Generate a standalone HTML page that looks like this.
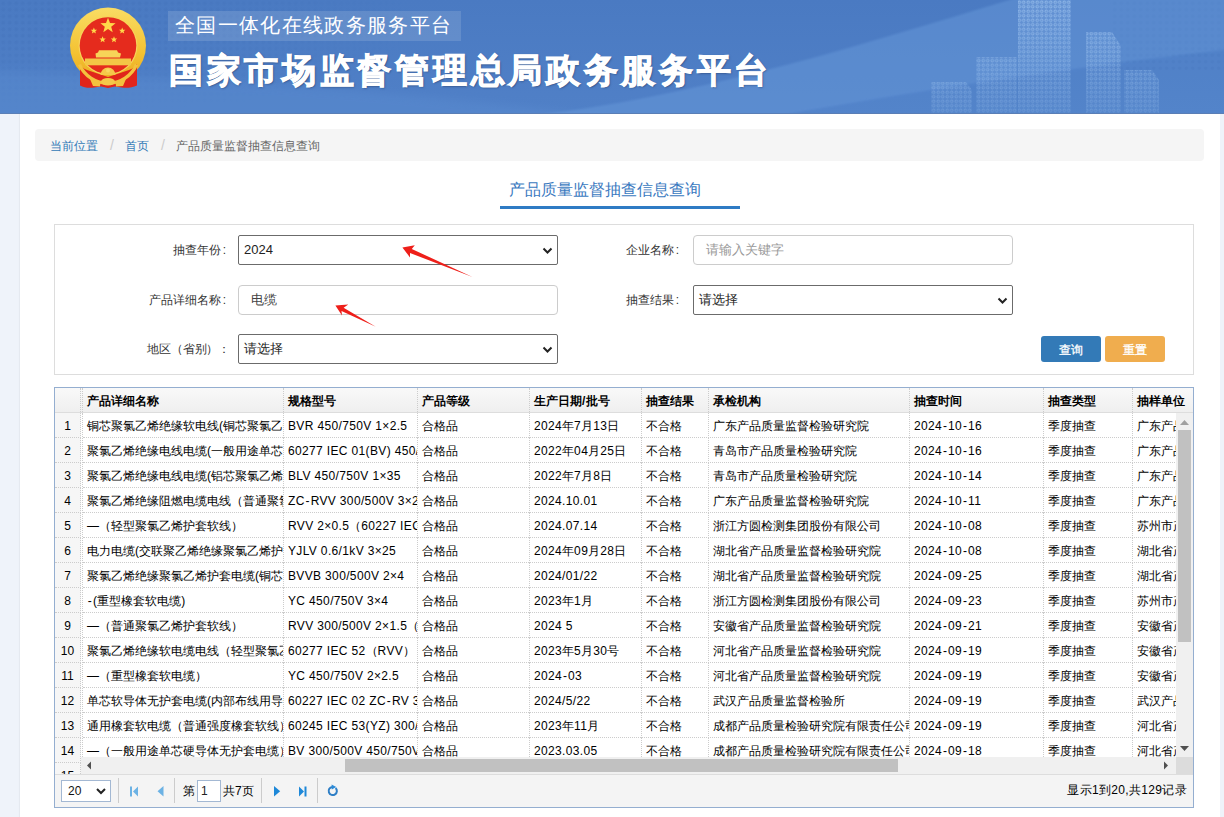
<!DOCTYPE html>
<html><head><meta charset="utf-8">
<style>
*{box-sizing:border-box}
html,body{margin:0;padding:0}
body{width:1224px;height:817px;overflow:hidden;background:#eff3fa;font-family:"Liberation Sans",sans-serif;font-size:12px;color:#333;position:relative}
.a{position:absolute}
#hdr{left:0;top:0;width:1224px;height:114px;overflow:hidden}
#main{left:20px;top:114px;width:1200px;height:703px;background:#fff;box-shadow:-1px 0 1px rgba(0,0,0,0.04)}
#bc{left:35px;top:129px;width:1169px;height:32px;background:#f5f5f5;border-radius:4px;line-height:32px;padding-left:15px;white-space:nowrap;font-size:12px}
#bc .l{color:#337ab7}
#bc .sep{color:#ccc;padding:0 11px 0 12px;font-size:14px}
#bc .cur{color:#666}
#ttl{left:500px;top:176px;width:240px;height:33px;border-bottom:3px solid #2f7bc4;text-align:left;padding-left:9px;font-size:16px;color:#3a79c0;line-height:28px}
#panel{left:54px;top:224px;width:1140px;height:151px;border:1px solid #ddd}
.lbl{position:absolute;font-size:12px;color:#333;line-height:30px;white-space:nowrap;padding-right:0px}
.sel,.inp{position:absolute;height:30px;font-size:13px;line-height:28px;padding-left:5px;color:#222;background:#fff;white-space:nowrap}
.sel{border:1px solid #6b6b6b;border-radius:2px}
.inp{border:1px solid #ccc;border-radius:4px}
.chev{position:absolute;right:4px;top:10.5px}
.btn{position:absolute;height:26px;width:60px;border-radius:3px;color:#fff;text-align:center;line-height:26px;padding-top:1px;font-size:12px;-webkit-text-stroke:0.3px #fff}
#grid{left:54px;top:387px;width:1140px;height:421px;border:1px solid #94aed0;background:#fff;overflow:hidden}
#gh{left:0;top:0;width:1138px;height:25px;background:linear-gradient(#f9f9f9,#efefef);border-bottom:1px solid #ddd}
#gh .c{font-weight:bold;color:#000;height:24px;line-height:24px}
.c{position:absolute;top:0;height:25px;border-right:1px dotted #ccc;padding-left:4px;padding-top:1px;white-space:nowrap;overflow:hidden;line-height:24px;font-size:12px;color:#000}
.r{position:absolute;left:0;width:1300px;height:25px;border-bottom:1px dotted #ccc}
#v2h{left:28px;top:0;width:1110px;height:24px;overflow:hidden}
#rnh{left:0;top:0;width:26px;height:24px;border-right:1px dotted #ccc}
#v2b{left:28px;top:25px;width:1093px;height:344px;overflow:hidden}
#rnb{left:0;top:25px;width:26px;height:361px;overflow:hidden;background:#fff}
.rn{position:absolute;left:0;width:26px;height:25px;text-align:center;line-height:24px;padding-top:1px;color:#000;background:#f6f6f6;border-right:1px dotted #ccc;border-bottom:1px dotted #ccc}
#vs{left:1121px;top:25px;width:17px;height:344px;background:#f0f0f0}
#hs{left:26px;top:369px;width:1095px;height:17px;background:#f0f0f0}
#corner{left:1121px;top:369px;width:17px;height:17px;background:#dcdcdc}
#pg{left:0;top:386px;width:1138px;height:33px;background:#f4f4f4;border-top:1px solid #ddd}
.psep{position:absolute;top:6px;width:1px;height:21px;border-left:1px solid #ccc;border-right:1px solid #fff}
.lt{letter-spacing:0.35px}.hy{font-style:normal;margin:0 0.8px}
</style></head><body>
<div id="hdr" class="a">
<svg width="1224" height="114" viewBox="0 0 1224 114">
<defs>
<linearGradient id="hg" x1="0" y1="0" x2="0" y2="1">
<stop offset="0" stop-color="#4a7ac2"/><stop offset="1" stop-color="#5080c7"/></linearGradient>
<pattern id="dots" width="4.5" height="4.5" patternUnits="userSpaceOnUse"><circle cx="2.25" cy="2.25" r="1.3" fill="none" stroke="#a9cdf5" stroke-width="0.9"/></pattern>
<pattern id="hd" width="6.5" height="6.5" patternUnits="userSpaceOnUse"><circle cx="3.25" cy="3.25" r="1.9" fill="#3d6bb2"/></pattern>
<linearGradient id="bfade" x1="0" y1="0" x2="0" y2="1"><stop offset="0" stop-color="#fff" stop-opacity="1"/><stop offset="1" stop-color="#fff" stop-opacity="0.35"/></linearGradient>
<mask id="bm"><rect width="1224" height="114" fill="url(#bfade)"/></mask>
<linearGradient id="gold" x1="0" y1="0" x2="0" y2="1"><stop offset="0" stop-color="#f9dc64"/><stop offset="0.6" stop-color="#f4c232"/><stop offset="1" stop-color="#e9a81e"/></linearGradient>
</defs>
<rect width="1224" height="114" fill="url(#hg)"/>
<filter id="blr" x="-10%" y="-50%" width="120%" height="200%"><feGaussianBlur stdDeviation="4"/></filter>
<radialGradient id="hdm" cx="0.2" cy="0.2" r="0.8"><stop offset="0" stop-color="#fff"/><stop offset="1" stop-color="#000"/></radialGradient>
<mask id="hdmask"><rect x="0" y="0" width="420" height="114" fill="url(#hdm)"/></mask>
<rect x="0" y="0" width="420" height="114" fill="url(#hd)" opacity="0.28" mask="url(#hdmask)"/>
<rect x="1110" y="0" width="114" height="70" fill="url(#hd)" opacity="0.25"/>
<filter id="blr2" x="-10%" y="-50%" width="120%" height="200%"><feGaussianBlur stdDeviation="1.2"/></filter>
<path d="M-20 130 L-20 70 C200 78 450 92 700 130 Z" fill="#6193d6" opacity="0.3" filter="url(#blr)"/>
<path d="M530 116 C700 96 860 45 1016 -2 L1226 -2 L1226 50 C1050 70 900 95 777 116 Z" fill="#6a9cdc" opacity="0.45" filter="url(#blr2)"/>
<path d="M777 116 C900 95 1050 70 1226 50 L1226 116 Z" fill="#5d90d4" opacity="0.25" filter="url(#blr2)"/>
<g fill="#9cc0ee" opacity="0.16" mask="url(#bm)">
<path d="M931 82 L966 82 L972 90 L972 114 L931 114 Z"/>
<rect x="976" y="57" width="41" height="57"/>
<rect x="1018" y="0" width="53" height="114"/>
<path d="M1086 32 L1112 32 L1121 46 L1121 114 L1086 114 Z"/>
<path d="M1124 70 L1152 70 L1159 80 L1159 114 L1124 114 Z"/>
</g>
<g fill="url(#dots)" opacity="0.8" mask="url(#bm)">
<path d="M931 82 L966 82 L972 90 L972 114 L931 114 Z"/>
<rect x="976" y="57" width="41" height="57"/>
<rect x="1018" y="0" width="53" height="114"/>
<path d="M1086 32 L1112 32 L1121 46 L1121 114 L1086 114 Z"/>
<path d="M1124 70 L1152 70 L1159 80 L1159 114 L1124 114 Z"/>
</g>
<g>
<circle cx="108" cy="45.5" r="38" fill="url(#gold)"/>
<circle cx="108" cy="45.5" r="29.5" fill="#f7d35a"/>
<circle cx="108" cy="45.5" r="28.3" fill="#e52b1d"/>
<path d="M108 17.8 L110 23.1 L115.6 23.3 L111.2 26.7 L112.7 32.2 L108 29.1 L103.3 32.2 L104.8 26.7 L100.4 23.3 L106 23.1 Z" fill="#ffd84a"/>
<g fill="#ffd84a">
<path d="M93.9 27.5 L94.8 29.7 L97.1 29.8 L95.3 31.3 L95.9 33.5 L93.9 32.2 L91.9 33.5 L92.5 31.3 L90.7 29.8 L93 29.7 Z"/>
<path d="M122.2 27.5 L123.1 29.7 L125.4 29.8 L123.6 31.3 L124.2 33.5 L122.2 32.2 L120.2 33.5 L120.8 31.3 L119 29.8 L121.3 29.7 Z"/>
<path d="M102.6 36.2 L103.5 38.4 L105.8 38.5 L104 40 L104.6 42.2 L102.6 40.9 L100.6 42.2 L101.2 40 L99.4 38.5 L101.7 38.4 Z"/>
<path d="M114 36.2 L114.9 38.4 L117.2 38.5 L115.4 40 L116 42.2 L114 40.9 L112 42.2 L112.6 40 L110.8 38.5 L113.1 38.4 Z"/>
</g>
<path d="M99 50.2 L117 50.2 L118 52.5 L121 53.5 L120 57.4 L96 57.4 L95.5 53.5 L98 52.5 Z" fill="#f7d458"/>
<rect x="85" y="58.5" width="46" height="6.8" fill="#f3c646"/>
<path d="M80 64 L80 85.5 C84 88 90 88 94 87.5 L101 86.5 L108 88 L115 86.5 L122 87.5 C126 88 132 88 137 85.5 L137 64 C134 68 130 70 126 71 L108 77 L90 71 C86 70 82 68 80 64 Z" fill="#e0251b"/>
<path d="M79.5 64.5 A31 31 0 0 0 136.5 64.5" fill="none" stroke="#f3c23e" stroke-width="3.2"/>
<path d="M100.5 75 A7.5 7.5 0 0 1 115.5 75 Z" fill="#f5c84a"/>
<circle cx="108" cy="70.5" r="2" fill="#f9d860"/>
<path d="M90 79 L100.5 81 L100 86.5 L93 86 Z M126 79 L115.5 81 L116 86.5 L123 86 Z" fill="#f3c23e"/>
<ellipse cx="108" cy="81.8" rx="7" ry="3.8" fill="#f5c84a"/>
</g>
<rect x="168" y="11" width="293" height="30" fill="#ffffff" opacity="0.13"/>
<rect id="hline" x="0" y="113" width="1224" height="1" fill="#5b7fb6"/>
</svg>
<div class="a" id="sub" style="left:175px;top:8px;font-size:20px;line-height:34px;color:#fff;letter-spacing:1.35px;white-space:nowrap">全国一体化在线政务服务平台</div>
<div class="a" id="tt" style="left:169px;top:45px;font-size:34px;font-weight:bold;line-height:50px;color:#fff;letter-spacing:3.7px;white-space:nowrap;-webkit-text-stroke:1px #fff;text-shadow:1px 1px 2px rgba(30,50,90,0.6)">国家市场监督管理总局政务服务平台</div>
</div>
<div id="main" class="a"></div>
<div id="bc" class="a"><span class="l">当前位置</span><span class="sep">/</span><span class="l">首页</span><span class="sep">/</span><span class="cur">产品质量监督抽查信息查询</span></div>
<div id="ttl" class="a">产品质量监督抽查信息查询</div>
<div id="panel" class="a"></div>
<div class="lbl" style="left:100px;width:126px;text-align:right;top:235px">抽查年份<span style="margin-left:1.5px">:</span></div>
<div class="lbl" style="left:100px;width:126px;text-align:right;top:285px">产品详细名称<span style="margin-left:1.5px">:</span></div>
<div class="lbl" style="left:100px;width:130px;text-align:right;top:334px;letter-spacing:-0.2px">地区（省别）：</div>
<div class="lbl" style="left:600px;width:79px;text-align:right;top:235px">企业名称<span style="margin-left:1.5px">:</span></div>
<div class="lbl" style="left:600px;width:79px;text-align:right;top:285px">抽查结果<span style="margin-left:1.5px">:</span></div>
<div class="sel" style="left:238px;top:235px;width:320px">2024<svg class="chev" width="11" height="8" viewBox="0 0 11 8"><path d="M1.5 1.5 L5.5 5.5 L9.5 1.5" fill="none" stroke="#222" stroke-width="2"/></svg></div>
<div class="inp" style="left:238px;top:285px;width:320px;padding-left:12px;color:#444">电缆</div>
<div class="sel" style="left:238px;top:334px;width:320px">请选择<svg class="chev" width="11" height="8" viewBox="0 0 11 8"><path d="M1.5 1.5 L5.5 5.5 L9.5 1.5" fill="none" stroke="#222" stroke-width="2"/></svg></div>
<div class="inp" style="left:693px;top:235px;width:320px;padding-left:12px;color:#999">请输入关键字</div>
<div class="sel" style="left:693px;top:285px;width:320px">请选择<svg class="chev" width="11" height="8" viewBox="0 0 11 8"><path d="M1.5 1.5 L5.5 5.5 L9.5 1.5" fill="none" stroke="#222" stroke-width="2"/></svg></div>
<div class="btn" style="left:1041px;top:336px;background:#337ab7">查询</div>
<div class="btn" style="left:1105px;top:336px;background:#f0ad4e">重置</div>
<svg class="a" style="left:0;top:0" width="1224" height="817">
<path d="M402.4 247.4 L414.8 245.3 L411.8 249.0 L472.5 277 L410.0 253.0 L410.0 257.4 Z" fill="#ee1f1a"/>
<path d="M335.4 305.6 L348.3 304.6 L343.6 307.8 L375.8 326.7 L341.5 311.1 L342.0 315.6 Z" fill="#ee1f1a"/>
</svg>
<div id="grid" class="a">
  <div id="gh" class="a">
    <div id="rnh" class="a"></div>
    <div class="a" style="left:27px;top:0;height:24px;border-left:1px dotted #ccc"></div><div id="v2h" class="a"><div class="c" style="left:0px;width:201px">产品详细名称</div><div class="c" style="left:201px;width:134px">规格型号</div><div class="c" style="left:335px;width:112px">产品等级</div><div class="c" style="left:447px;width:112px">生产日期<span class="lt">/</span>批号</div><div class="c" style="left:559px;width:67px">抽查结果</div><div class="c" style="left:626px;width:201px">承检机构</div><div class="c" style="left:827px;width:134px">抽查时间</div><div class="c" style="left:961px;width:89px">抽查类型</div><div class="c" style="left:1050px;width:168px">抽样单位</div></div>
  </div>
  <div id="rnb" class="a"><div class="rn" style="top:0px">1</div><div class="rn" style="top:25px">2</div><div class="rn" style="top:50px">3</div><div class="rn" style="top:75px">4</div><div class="rn" style="top:100px">5</div><div class="rn" style="top:125px">6</div><div class="rn" style="top:150px">7</div><div class="rn" style="top:175px">8</div><div class="rn" style="top:200px">9</div><div class="rn" style="top:225px">10</div><div class="rn" style="top:250px">11</div><div class="rn" style="top:275px">12</div><div class="rn" style="top:300px">13</div><div class="rn" style="top:325px">14</div><div class="rn" style="top:350px">15</div></div>
  <div class="a" style="left:27px;top:25px;height:344px;border-left:1px dotted #ccc"></div><div id="v2b" class="a"><div class="r" style="top:0px"><div class="c" style="left:0px;width:201px">铜芯聚氯乙烯绝缘软电线<span class="lt">(</span>铜芯聚氯乙烯绝缘软电线<span class="lt">)</span></div><div class="c" style="left:201px;width:134px"><span class="lt">BVR 450/750V 1×2.5</span></div><div class="c" style="left:335px;width:112px">合格品</div><div class="c" style="left:447px;width:112px"><span class="lt">2024</span>年<span class="lt">7</span>月<span class="lt">13</span>日</div><div class="c" style="left:559px;width:67px">不合格</div><div class="c" style="left:626px;width:201px">广东产品质量监督检验研究院</div><div class="c" style="left:827px;width:134px"><span class="lt">2024<i class="hy">-</i>10<i class="hy">-</i>16</span></div><div class="c" style="left:961px;width:89px">季度抽查</div><div class="c" style="left:1050px;width:168px">广东产品质量监督检验研究院</div></div><div class="r" style="top:25px"><div class="c" style="left:0px;width:201px">聚氯乙烯绝缘电线电缆<span class="lt">(</span>一般用途单芯硬导体<span class="lt">)</span></div><div class="c" style="left:201px;width:134px"><span class="lt">60277 IEC 01(BV) 450/750V</span></div><div class="c" style="left:335px;width:112px">合格品</div><div class="c" style="left:447px;width:112px"><span class="lt">2022</span>年<span class="lt">04</span>月<span class="lt">25</span>日</div><div class="c" style="left:559px;width:67px">不合格</div><div class="c" style="left:626px;width:201px">青岛市产品质量检验研究院</div><div class="c" style="left:827px;width:134px"><span class="lt">2024<i class="hy">-</i>10<i class="hy">-</i>16</span></div><div class="c" style="left:961px;width:89px">季度抽查</div><div class="c" style="left:1050px;width:168px">广东产品质量</div></div><div class="r" style="top:50px"><div class="c" style="left:0px;width:201px">聚氯乙烯绝缘电线电缆<span class="lt">(</span>铝芯聚氯乙烯绝缘电线<span class="lt">)</span></div><div class="c" style="left:201px;width:134px"><span class="lt">BLV 450/750V 1×35</span></div><div class="c" style="left:335px;width:112px">合格品</div><div class="c" style="left:447px;width:112px"><span class="lt">2022</span>年<span class="lt">7</span>月<span class="lt">8</span>日</div><div class="c" style="left:559px;width:67px">不合格</div><div class="c" style="left:626px;width:201px">青岛市产品质量检验研究院</div><div class="c" style="left:827px;width:134px"><span class="lt">2024<i class="hy">-</i>10<i class="hy">-</i>14</span></div><div class="c" style="left:961px;width:89px">季度抽查</div><div class="c" style="left:1050px;width:168px">广东产品质量</div></div><div class="r" style="top:75px"><div class="c" style="left:0px;width:201px">聚氯乙烯绝缘阻燃电缆电线（普通聚氯乙烯护套软线）</div><div class="c" style="left:201px;width:134px"><span class="lt">ZC<i class="hy">-</i>RVV 300/500V 3×2.5</span></div><div class="c" style="left:335px;width:112px">合格品</div><div class="c" style="left:447px;width:112px"><span class="lt">2024.10.01</span></div><div class="c" style="left:559px;width:67px">不合格</div><div class="c" style="left:626px;width:201px">广东产品质量监督检验研究院</div><div class="c" style="left:827px;width:134px"><span class="lt">2024<i class="hy">-</i>10<i class="hy">-</i>11</span></div><div class="c" style="left:961px;width:89px">季度抽查</div><div class="c" style="left:1050px;width:168px">广东产品质量</div></div><div class="r" style="top:100px"><div class="c" style="left:0px;width:201px">—（轻型聚氯乙烯护套软线）</div><div class="c" style="left:201px;width:134px"><span class="lt">RVV 2×0.5</span>（<span class="lt">60227 IEC 52</span>）</div><div class="c" style="left:335px;width:112px">合格品</div><div class="c" style="left:447px;width:112px"><span class="lt">2024.07.14</span></div><div class="c" style="left:559px;width:67px">不合格</div><div class="c" style="left:626px;width:201px">浙江方圆检测集团股份有限公司</div><div class="c" style="left:827px;width:134px"><span class="lt">2024<i class="hy">-</i>10<i class="hy">-</i>08</span></div><div class="c" style="left:961px;width:89px">季度抽查</div><div class="c" style="left:1050px;width:168px">苏州市产品质量</div></div><div class="r" style="top:125px"><div class="c" style="left:0px;width:201px">电力电缆<span class="lt">(</span>交联聚乙烯绝缘聚氯乙烯护套电力电缆<span class="lt">)</span></div><div class="c" style="left:201px;width:134px"><span class="lt">YJLV 0.6/1kV 3×25</span></div><div class="c" style="left:335px;width:112px">合格品</div><div class="c" style="left:447px;width:112px"><span class="lt">2024</span>年<span class="lt">09</span>月<span class="lt">28</span>日</div><div class="c" style="left:559px;width:67px">不合格</div><div class="c" style="left:626px;width:201px">湖北省产品质量监督检验研究院</div><div class="c" style="left:827px;width:134px"><span class="lt">2024<i class="hy">-</i>10<i class="hy">-</i>08</span></div><div class="c" style="left:961px;width:89px">季度抽查</div><div class="c" style="left:1050px;width:168px">湖北省产品质量</div></div><div class="r" style="top:150px"><div class="c" style="left:0px;width:201px">聚氯乙烯绝缘聚氯乙烯护套电缆<span class="lt">(</span>铜芯聚氯乙烯<span class="lt">)</span></div><div class="c" style="left:201px;width:134px"><span class="lt">BVVB 300/500V 2×4</span></div><div class="c" style="left:335px;width:112px">合格品</div><div class="c" style="left:447px;width:112px"><span class="lt">2024/01/22</span></div><div class="c" style="left:559px;width:67px">不合格</div><div class="c" style="left:626px;width:201px">湖北省产品质量监督检验研究院</div><div class="c" style="left:827px;width:134px"><span class="lt">2024<i class="hy">-</i>09<i class="hy">-</i>25</span></div><div class="c" style="left:961px;width:89px">季度抽查</div><div class="c" style="left:1050px;width:168px">湖北省产品质量</div></div><div class="r" style="top:175px"><div class="c" style="left:0px;width:201px"><span class="lt"><i class="hy">-</i>(</span>重型橡套软电缆<span class="lt">)</span></div><div class="c" style="left:201px;width:134px"><span class="lt">YC 450/750V 3×4</span></div><div class="c" style="left:335px;width:112px">合格品</div><div class="c" style="left:447px;width:112px"><span class="lt">2023</span>年<span class="lt">1</span>月</div><div class="c" style="left:559px;width:67px">不合格</div><div class="c" style="left:626px;width:201px">浙江方圆检测集团股份有限公司</div><div class="c" style="left:827px;width:134px"><span class="lt">2024<i class="hy">-</i>09<i class="hy">-</i>23</span></div><div class="c" style="left:961px;width:89px">季度抽查</div><div class="c" style="left:1050px;width:168px">苏州市产品质量</div></div><div class="r" style="top:200px"><div class="c" style="left:0px;width:201px">—（普通聚氯乙烯护套软线）</div><div class="c" style="left:201px;width:134px"><span class="lt">RVV 300/500V 2×1.5</span>（<span class="lt">60227 IEC 53</span>）</div><div class="c" style="left:335px;width:112px">合格品</div><div class="c" style="left:447px;width:112px"><span class="lt">2024 5</span></div><div class="c" style="left:559px;width:67px">不合格</div><div class="c" style="left:626px;width:201px">安徽省产品质量监督检验研究院</div><div class="c" style="left:827px;width:134px"><span class="lt">2024<i class="hy">-</i>09<i class="hy">-</i>21</span></div><div class="c" style="left:961px;width:89px">季度抽查</div><div class="c" style="left:1050px;width:168px">安徽省产品质量</div></div><div class="r" style="top:225px"><div class="c" style="left:0px;width:201px">聚氯乙烯绝缘软电缆电线（轻型聚氯乙烯护套软线）</div><div class="c" style="left:201px;width:134px"><span class="lt">60277 IEC 52</span>（<span class="lt">RVV</span>）<span class="lt"> 3×1.5</span></div><div class="c" style="left:335px;width:112px">合格品</div><div class="c" style="left:447px;width:112px"><span class="lt">2023</span>年<span class="lt">5</span>月<span class="lt">30</span>号</div><div class="c" style="left:559px;width:67px">不合格</div><div class="c" style="left:626px;width:201px">河北省产品质量监督检验研究院</div><div class="c" style="left:827px;width:134px"><span class="lt">2024<i class="hy">-</i>09<i class="hy">-</i>19</span></div><div class="c" style="left:961px;width:89px">季度抽查</div><div class="c" style="left:1050px;width:168px">安徽省产品质量</div></div><div class="r" style="top:250px"><div class="c" style="left:0px;width:201px">—（重型橡套软电缆）</div><div class="c" style="left:201px;width:134px"><span class="lt">YC 450/750V 2×2.5</span></div><div class="c" style="left:335px;width:112px">合格品</div><div class="c" style="left:447px;width:112px"><span class="lt">2024<i class="hy">-</i>03</span></div><div class="c" style="left:559px;width:67px">不合格</div><div class="c" style="left:626px;width:201px">河北省产品质量监督检验研究院</div><div class="c" style="left:827px;width:134px"><span class="lt">2024<i class="hy">-</i>09<i class="hy">-</i>19</span></div><div class="c" style="left:961px;width:89px">季度抽查</div><div class="c" style="left:1050px;width:168px">安徽省产品质量</div></div><div class="r" style="top:275px"><div class="c" style="left:0px;width:201px">单芯软导体无护套电缆<span class="lt">(</span>内部布线用导体<span class="lt">)</span></div><div class="c" style="left:201px;width:134px"><span class="lt">60227 IEC 02 ZC<i class="hy">-</i>RV 300/500V</span></div><div class="c" style="left:335px;width:112px">合格品</div><div class="c" style="left:447px;width:112px"><span class="lt">2024/5/22</span></div><div class="c" style="left:559px;width:67px">不合格</div><div class="c" style="left:626px;width:201px">武汉产品质量监督检验所</div><div class="c" style="left:827px;width:134px"><span class="lt">2024<i class="hy">-</i>09<i class="hy">-</i>19</span></div><div class="c" style="left:961px;width:89px">季度抽查</div><div class="c" style="left:1050px;width:168px">武汉产品质量</div></div><div class="r" style="top:300px"><div class="c" style="left:0px;width:201px">通用橡套软电缆（普通强度橡套软线）</div><div class="c" style="left:201px;width:134px"><span class="lt">60245 IEC 53(YZ) 300/500V</span></div><div class="c" style="left:335px;width:112px">合格品</div><div class="c" style="left:447px;width:112px"><span class="lt">2023</span>年<span class="lt">11</span>月</div><div class="c" style="left:559px;width:67px">不合格</div><div class="c" style="left:626px;width:201px">成都产品质量检验研究院有限责任公司</div><div class="c" style="left:827px;width:134px"><span class="lt">2024<i class="hy">-</i>09<i class="hy">-</i>19</span></div><div class="c" style="left:961px;width:89px">季度抽查</div><div class="c" style="left:1050px;width:168px">河北省产品质量</div></div><div class="r" style="top:325px"><div class="c" style="left:0px;width:201px">—（一般用途单芯硬导体无护套电缆）</div><div class="c" style="left:201px;width:134px"><span class="lt">BV 300/500V 450/750V</span></div><div class="c" style="left:335px;width:112px">合格品</div><div class="c" style="left:447px;width:112px"><span class="lt">2023.03.05</span></div><div class="c" style="left:559px;width:67px">不合格</div><div class="c" style="left:626px;width:201px">成都产品质量检验研究院有限责任公司</div><div class="c" style="left:827px;width:134px"><span class="lt">2024<i class="hy">-</i>09<i class="hy">-</i>18</span></div><div class="c" style="left:961px;width:89px">季度抽查</div><div class="c" style="left:1050px;width:168px">河北省产品质量</div></div><div class="r" style="top:350px"><div class="c" style="left:0px;width:201px">—（一般用途单芯硬导体无护套电缆）</div><div class="c" style="left:201px;width:134px"><span class="lt">BV 300/500V</span></div><div class="c" style="left:335px;width:112px">合格品</div><div class="c" style="left:447px;width:112px"><span class="lt">2023.03.05</span></div><div class="c" style="left:559px;width:67px">不合格</div><div class="c" style="left:626px;width:201px">成都产品质量检验研究院有限责任公司</div><div class="c" style="left:827px;width:134px"><span class="lt">2024<i class="hy">-</i>09<i class="hy">-</i>18</span></div><div class="c" style="left:961px;width:89px">季度抽查</div><div class="c" style="left:1050px;width:168px">河北省产品质量</div></div></div>
  <div id="vs" class="a">
    <svg width="17" height="344"><path d="M4 12 L8.5 7 L13 12 Z" fill="#a0a0a0"/><rect x="2" y="17" width="13" height="212" fill="#c1c1c1"/><path d="M4 333 L8.5 338 L13 333 Z" fill="#505050"/></svg>
  </div>
  <div id="hs" class="a">
    <svg width="1095" height="17"><path d="M10 4.5 L6 8.5 L10 12.5 Z" fill="#505050"/><rect x="264" y="2" width="553" height="13" fill="#c1c1c1"/><path d="M1083 4.5 L1087 8.5 L1083 12.5 Z" fill="#505050"/></svg>
  </div>
  <div id="corner" class="a"></div>
  <div id="pg" class="a">
    <div class="a" style="left:6px;top:5px;width:50px;height:22px;border:1px solid #a3b8d3;background:#fff;font-size:12px;line-height:21px;padding-left:6px;color:#111">20<svg class="a" style="left:34px;top:7px" width="10" height="7" viewBox="0 0 10 7"><path d="M1 1 L5 5 L9 1" fill="none" stroke="#222" stroke-width="2"/></svg></div>
    <div class="a" style="left:63px;top:3px;width:1px;height:25px;background:#ccc"></div>
    <svg class="a" style="left:75px;top:11px" width="9" height="11"><rect x="0" y="0.5" width="2" height="10" fill="#6cb2e4"/><path d="M8 0.5 L3 5.5 L8 10.5 Z" fill="#6cb2e4"/></svg>
    <svg class="a" style="left:101px;top:11px" width="9" height="11"><path d="M7.5 0 L1.5 5.2 L7.5 10.5 Z" fill="#6cb2e4"/></svg>
    <div class="a" style="left:119px;top:3px;width:1px;height:25px;background:#ccc"></div>
    <div class="a" style="left:128px;top:0;line-height:32px;font-size:12px;color:#000">第</div>
    <div class="a" style="left:142px;top:5px;width:24px;height:22px;border:1px solid #a3b8d3;background:#fff;font-size:12px;line-height:21px;padding-left:3px;color:#222">1</div>
    <div class="a" style="left:168px;top:0;line-height:32px;font-size:12px;color:#000">共7页</div>
    <div class="a" style="left:206px;top:3px;width:1px;height:25px;background:#ccc"></div>
    <svg class="a" style="left:218px;top:11px" width="9" height="11"><path d="M1 0 L7.2 5.2 L1 10.5 Z" fill="#1e88d8"/></svg>
    <svg class="a" style="left:243px;top:11px" width="10" height="11"><path d="M1 0.5 L6 5.5 L1 10.5 Z" fill="#1e88d8"/><rect x="6.5" y="0.5" width="2" height="10" fill="#1e88d8"/></svg>
    <div class="a" style="left:262px;top:3px;width:1px;height:25px;background:#ccc"></div>
    <svg class="a" style="left:272px;top:9px" width="14" height="14" viewBox="0 -1 14 14"><path d="M8.6 3.0 A4.1 4.1 0 1 1 5.3 1.9" fill="none" stroke="#2f7fc6" stroke-width="2"/><path d="M4.6 -0.6 L9.2 2.0 L4.8 4.4 Z" fill="#2a8ad8"/></svg>
    <div class="a" style="right:6px;top:-1px;line-height:32px;font-size:12px;color:#000;letter-spacing:0.3px">显示<span class="lt">1</span>到<span class="lt">20,</span>共<span class="lt">129</span>记录</div>
  </div>
</div>
</body></html>
